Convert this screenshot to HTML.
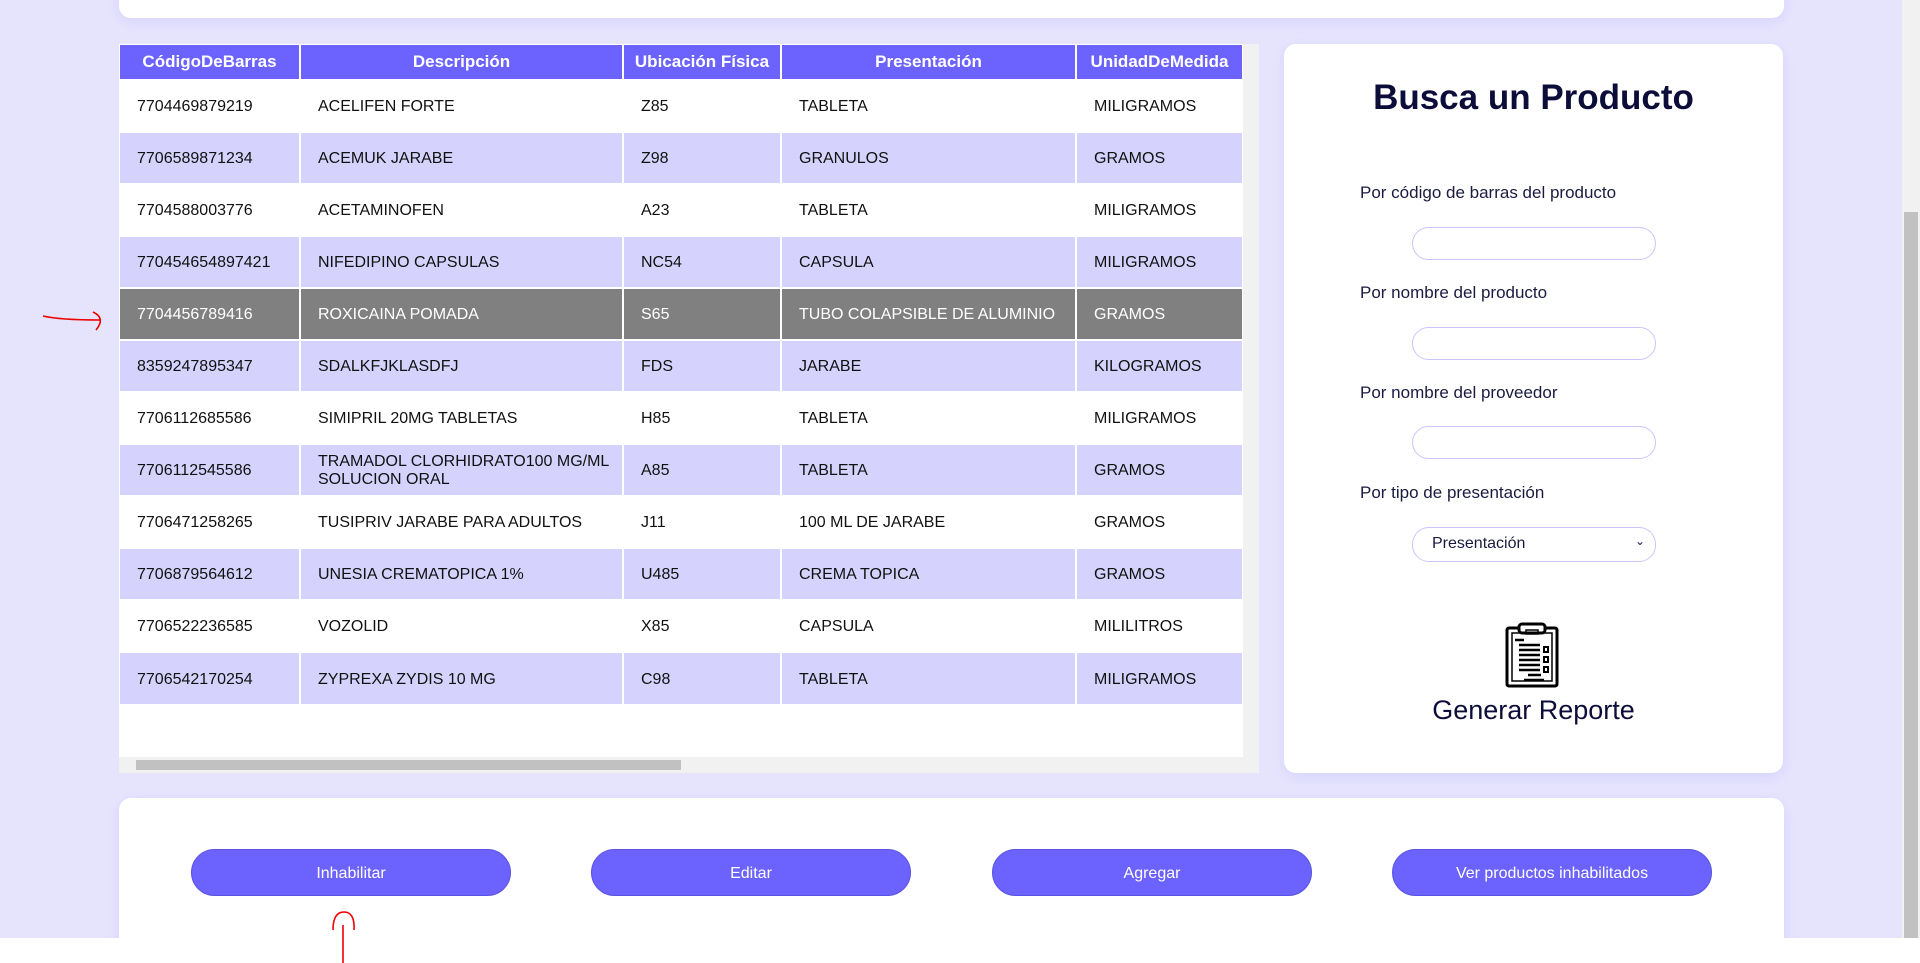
<!DOCTYPE html>
<html><head><meta charset="utf-8"><style>
*{box-sizing:border-box;margin:0;padding:0}
body{width:1920px;height:963px;overflow:hidden;background:#fff;font-family:"Liberation Sans",sans-serif;position:relative}
.bg{position:absolute;left:0;top:0;width:1902px;height:938px;background:#e6e4fd}
.card{position:absolute;background:#fff;border-radius:12px;box-shadow:0 4px 14px rgba(108,99,255,0.12)}
.tbl{position:absolute;left:119px;top:44px;width:1140px;height:729px;background:#fff;overflow:hidden}
table{border-collapse:collapse;position:absolute;left:1px;top:1px}
th{background:#6c63ff;color:#fff;font-size:17px;font-weight:bold;height:35px;border-right:2px solid #fff;text-align:center}
td{font-size:16px;color:#111;height:52px;padding-left:17px;padding-top:2px;border-right:2px solid #fff;border-top:2px solid #fff;line-height:18px}
tr.a td{background:#d5d3fd}
tr.s td{background:#808080;color:#fff}
.vs{position:absolute;left:1243px;top:44px;width:16px;height:713px;background:#f1f1f1}
.hs{position:absolute;left:119px;top:757px;width:1140px;height:16px;background:#f1f1f1}
.hs div{position:absolute;left:17px;top:3px;width:545px;height:10px;background:#c1c1c1}
.lbl{position:absolute;left:1360px;font-size:17px;color:#1a1a40}
.inp{position:absolute;left:1412px;width:244px;height:33px;border:1px solid #c9c5ff;border-radius:17px;background:#fff}
.btn{position:absolute;top:849px;width:320px;height:47px;border-radius:24px;background:#6c63ff;color:#fff;font-size:16px;text-align:center;line-height:47px;border:1px solid #5a52e0}
</style></head><body>
<div class="bg"></div>
<div class="card" style="left:119px;top:-20px;width:1665px;height:38px"></div>
<div class="tbl">
<table>
<tr><th style="width:180px">CódigoDeBarras</th><th style="width:323px">Descripción</th><th style="width:158px">Ubicación Física</th><th style="width:295px">Presentación</th><th style="width:167px">UnidadDeMedida</th></tr>
<tr><td>7704469879219</td><td>ACELIFEN FORTE</td><td>Z85</td><td>TABLETA</td><td>MILIGRAMOS</td></tr>
<tr class="a"><td>7706589871234</td><td>ACEMUK JARABE</td><td>Z98</td><td>GRANULOS</td><td>GRAMOS</td></tr>
<tr><td>7704588003776</td><td>ACETAMINOFEN</td><td>A23</td><td>TABLETA</td><td>MILIGRAMOS</td></tr>
<tr class="a"><td>770454654897421</td><td>NIFEDIPINO CAPSULAS</td><td>NC54</td><td>CAPSULA</td><td>MILIGRAMOS</td></tr>
<tr class="s"><td>7704456789416</td><td>ROXICAINA POMADA</td><td>S65</td><td>TUBO COLAPSIBLE DE ALUMINIO</td><td>GRAMOS</td></tr>
<tr class="a"><td>8359247895347</td><td>SDALKFJKLASDFJ</td><td>FDS</td><td>JARABE</td><td>KILOGRAMOS</td></tr>
<tr><td>7706112685586</td><td>SIMIPRIL 20MG TABLETAS</td><td>H85</td><td>TABLETA</td><td>MILIGRAMOS</td></tr>
<tr class="a"><td>7706112545586</td><td>TRAMADOL CLORHIDRATO100 MG/ML<br>SOLUCION ORAL</td><td>A85</td><td>TABLETA</td><td>GRAMOS</td></tr>
<tr><td>7706471258265</td><td>TUSIPRIV JARABE PARA ADULTOS</td><td>J11</td><td>100 ML DE JARABE</td><td>GRAMOS</td></tr>
<tr class="a"><td>7706879564612</td><td>UNESIA CREMATOPICA 1%</td><td>U485</td><td>CREMA TOPICA</td><td>GRAMOS</td></tr>
<tr><td>7706522236585</td><td>VOZOLID</td><td>X85</td><td>CAPSULA</td><td>MILILITROS</td></tr>
<tr class="a"><td>7706542170254</td><td>ZYPREXA ZYDIS 10 MG</td><td>C98</td><td>TABLETA</td><td>MILIGRAMOS</td></tr>
</table>
</div>
<div class="vs"></div>
<div class="hs"><div></div></div>
<div class="card" style="left:1284px;top:44px;width:499px;height:729px">
</div>
<div style="position:absolute;left:1284px;top:78px;width:499px;text-align:center;font-size:35px;font-weight:bold;color:#0d0d3a">Busca un Producto</div>
<div class="lbl" style="top:183px">Por código de barras del producto</div>
<div class="inp" style="top:227px"></div>
<div class="lbl" style="top:283px">Por nombre del producto</div>
<div class="inp" style="top:327px"></div>
<div class="lbl" style="top:383px">Por nombre del proveedor</div>
<div class="inp" style="top:426px"></div>
<div class="lbl" style="top:483px">Por tipo de presentación</div>
<div class="inp" style="top:527px;height:35px;font-size:16px;color:#1a1a40;padding:7px 0 0 19px">Presentación<span style="position:absolute;right:10px;top:6px;font-size:12px">&#x2304;</span></div>
<svg style="position:absolute;left:1505px;top:622px" width="58" height="66" viewBox="0 0 58 66" fill="none" stroke="#000">
<rect x="2" y="6" width="50" height="58" rx="2" stroke-width="3"/>
<rect x="7" y="11" width="40" height="48" stroke-width="1.5"/>
<rect x="14" y="2" width="26" height="9" rx="3" stroke-width="3" fill="#fff"/>
<rect x="21" y="8" width="12" height="4" stroke-width="1.5"/>
<g stroke-width="2.5"><path d="M10 18h9M14 23h21M14 28h21M14 33h21M14 38h21M14 43h21M14 48h21M23 53h13M19 58h20"/></g>
<g stroke-width="2"><rect x="39" y="25" width="4" height="5"/><rect x="39" y="35" width="4" height="5"/><rect x="39" y="45" width="4" height="5"/></g>
</svg>
<div style="position:absolute;left:1284px;top:695px;width:499px;text-align:center;font-size:27px;color:#0d0d3a">Generar Reporte</div>
<div class="card" style="left:119px;top:798px;width:1665px;height:160px;border-radius:12px 12px 0 0"></div>
<div style="position:absolute;left:0;top:938px;width:1920px;height:25px;background:#fff"></div>
<div class="btn" style="left:191px">Inhabilitar</div>
<div class="btn" style="left:591px">Editar</div>
<div class="btn" style="left:992px">Agregar</div>
<div class="btn" style="left:1392px">Ver productos inhabilitados</div>
<div style="position:absolute;left:1902px;top:0;width:18px;height:938px;background:#f1f1f1"></div>
<div style="position:absolute;left:1904px;top:212px;width:14px;height:726px;background:#c1c1c1"></div>
<svg style="position:absolute;left:0;top:0" width="1920" height="963" fill="none" stroke="#e00" stroke-width="1.6">
<path d="M43 316 Q60 320 100 320"/><path d="M93 312 Q106 318 96 330"/>
<path d="M343 963 L343 925"/><path d="M333 930 Q333 912 344 912 Q355 912 354 930"/>
</svg>
</body></html>
